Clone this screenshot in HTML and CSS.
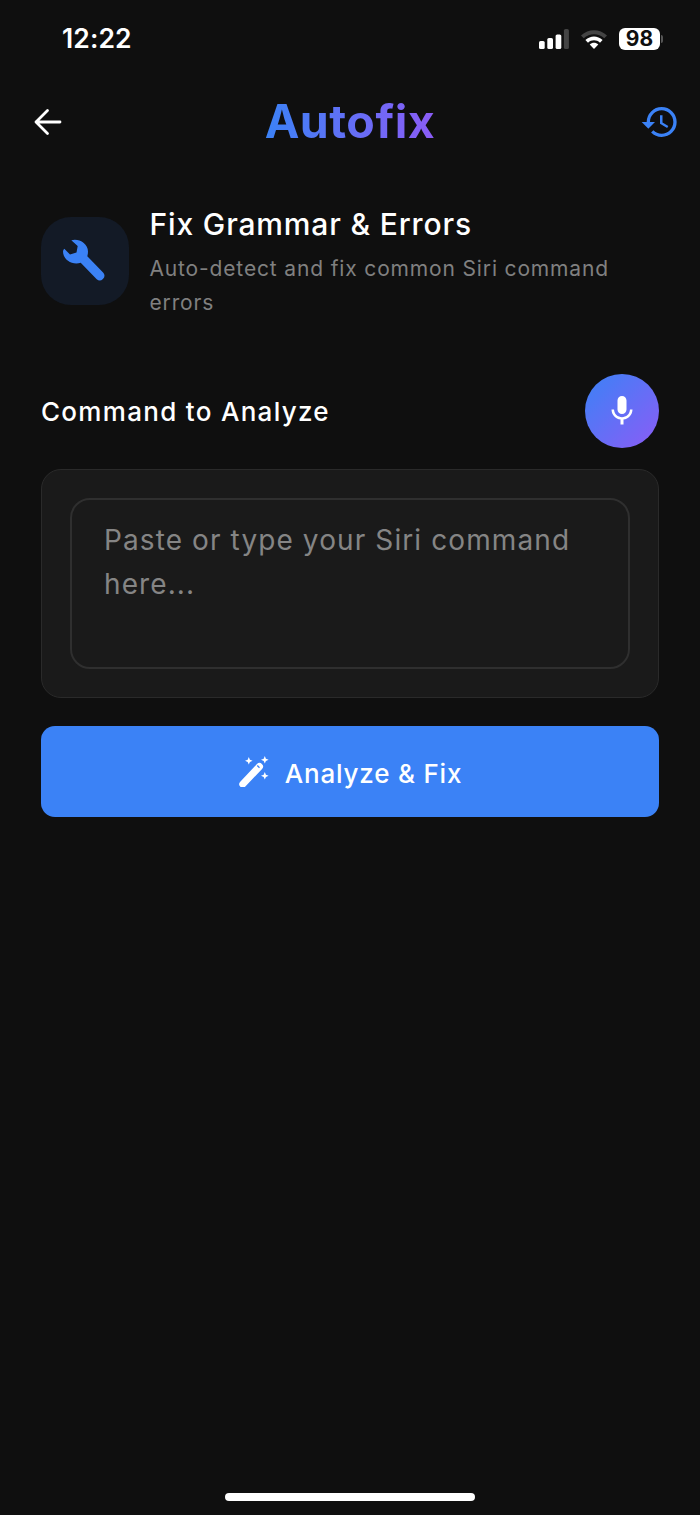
FILE: index.html
```html
<!DOCTYPE html>
<html lang="en">
<head>
<meta charset="utf-8">
<title>Autofix</title>
<link rel="stylesheet" href="styles.css">
</head>
<body>
<div class="screen">
  <div class="status">
    <span class="time">12:22</span>
    <div class="status-icons">
      <svg class="signal" width="32" height="22" viewBox="0 0 32 22">
        <rect x="1" y="13" width="5.7" height="8" rx="1.6" fill="#fff"/>
        <rect x="9.300" y="10" width="5.700" height="11" rx="1.6" fill="#fff"/>
        <rect x="17.600" y="6.500" width="5.700" height="14.500" rx="1.6" fill="#fff"/>
        <rect x="25.900" y="1" width="5" height="20" rx="1.600" fill="#444"/>
      </svg>
      <svg class="wifi" width="28" height="22" viewBox="0 0 28 22">
        <path d="M1 7.500C8.500 .5 19.500 .5 27 7.500L24.300 10.300C18.500 5 9.500 5 3.700 10.300Z" fill="#444"/>
        <path d="M5.400 12C10.500 7.200 17.500 7.200 22.600 12L20 14.700C16.300 11.500 11.700 11.500 8 14.700Z" fill="#fff"/>
        <path d="M9.700 16.500C12.300 14.300 15.700 14.300 18.300 16.500L14 21Z" fill="#fff"/>
      </svg>
      <div class="battery"><span class="battery-level">98</span><span class="battery-cap"></span></div>
    </div>
  </div>

  <header class="topbar">
    <svg class="back" width="30" height="30" viewBox="0 0 30 30" fill="none" stroke="#fff" stroke-width="2.800" stroke-linecap="round" stroke-linejoin="round">
      <path d="M3 15H27M14.500 3.500L3 15L14.500 26.500"/>
    </svg>
    <h1 class="brand">Autofix</h1>
    <svg class="history" width="40" height="40" viewBox="0 0 24 24" fill="#3b82f6">
      <path d="M13 3a9 9 0 0 0-9 9H1l3.890 3.890.07.140L9 12H6c0-3.870 3.130-7 7-7s7 3.130 7 7-3.130 7-7 7c-1.930 0-3.680-.79-4.940-2.060l-1.420 1.420A8.954 8.954 0 0 0 13 21a9 9 0 0 0 0-18zm-1 5v5l4.280 2.540.72-1.210-3.500-2.080V8H12z"/>
    </svg>
  </header>

  <section class="intro">
    <div class="intro-icon">
      <svg width="60" height="56" viewBox="0 1 60 56" fill="#3b82f6">
        <path d="M9.300 16.700L15 22.500L21.500 20.500L22.700 14L16.300 8.300C23 6 33 11 33 19.500C33 21 32.800 22.500 32.300 24.200L48.300 40.700A4.700 4.700 0 0 1 41.700 47.300L25.700 30.800C17 33.500 8 27.500 8 19.500C8 18.500 8.500 17.500 9.300 16.700Z"/>
      </svg>
    </div>
    <div class="intro-text">
      <h2 class="intro-title">Fix Grammar &amp; Errors</h2>
      <p class="intro-desc">Auto-detect and fix common Siri command errors</p>
    </div>
  </section>

  <div class="section-row">
    <h3 class="section-label">Command to Analyze</h3>
    <button class="mic" type="button" aria-label="Voice input">
      <svg width="36" height="36" viewBox="0 0 24 24" fill="#fff">
        <path d="M12 14c1.660 0 3-1.340 3-3V5c0-1.660-1.340-3-3-3S9 3.340 9 5v6c0 1.660 1.340 3 3 3zm5.300-3c0 3-2.540 5.100-5.300 5.100S6.700 14 6.700 11H5c0 3.410 2.720 6.230 6 6.720V21h2v-3.280c3.280-.49 6-3.310 6-6.720h-1.700z"/>
      </svg>
    </button>
  </div>

  <div class="card">
    <div class="input">Paste or type your Siri command here...</div>
  </div>

  <button class="primary" type="button">
    <svg class="wand" width="33" height="33" viewBox="0 0 33 33" fill="#fff">
      <path d="M4.800 30.200L21.500 12.500" fill="none" stroke="#fff" stroke-width="7" stroke-linecap="round"/>
      <path d="M19.300 11.500L21.500 13.700" fill="none" stroke="#3b82f6" stroke-width="1.300"/>
      <path d="M10.800 3l1.100 2.700 2.700 1.100-2.700 1.100-1.100 2.700-1.100-2.700-2.700-1.100 2.700-1.100zM26.800 2l1.100 2.700 2.700 1.100-2.700 1.100-1.100 2.700-1.100-2.700-2.700-1.100 2.700-1.100zM26.800 18l1.100 2.700 2.700 1.100-2.700 1.100-1.100 2.700-1.100-2.700-2.700-1.100 2.700-1.100z"/>
    </svg>
    <span class="primary-label">Analyze &amp; Fix</span>
  </button>

  <div class="home-indicator"></div>
</div>
</body>
</html>
```

FILE: styles.css
```css
* { box-sizing: border-box; }
html, body { margin: 0; padding: 0; background: #0f0f0f; }
.screen {
  width: 700px;
  height: 1515px;
  background: #0f0f0f;
  color: #fff;
  font-family: Inter, "Liberation Sans", sans-serif;
  display: flex;
  flex-direction: column;
  padding: 0 41px;
}
.status {
  height: 78px;
  margin: 0 -41px;
  padding: 0 37px 0 62px;
  display: flex;
  justify-content: space-between;
  align-items: center;
}
.time { font-size: 26.500px; font-weight: 600; letter-spacing: .1px; margin-top: -2px; }
.status-icons { display: flex; align-items: center; gap: 11px; }
.wifi { margin-left: -1px; }
.battery { display: flex; align-items: center; gap: 1px; }
.battery-level {
  width: 41px; height: 22px;
  background: #fff; color: #0f0f0f;
  border-radius: 6px;
  font-size: 21px; font-weight: 700;
  line-height: 22px; text-align: center;
}
.battery-cap { width: 2px; height: 8px; background: #555; border-radius: 0 2px 2px 0; }

.topbar {
  height: 88px;
  display: grid;
  grid-template-columns: 1fr auto 1fr;
  align-items: center;
  margin: 0 -21px;
}
.back { margin-left: 13px; justify-self: start; }
.history { justify-self: end; }
.brand {
  margin: -2px 0 0;
  font-size: 46.500px;
  font-weight: 700;
  letter-spacing: .5px;
  background: linear-gradient(90deg, #3b82f6, #8b5cf6);
  -webkit-background-clip: text;
  background-clip: text;
  color: transparent;
}
.intro { display: flex; gap: 20.500px; margin-top: 51px; }
.intro-icon {
  width: 88px; height: 88px;
  flex: none;
  border-radius: 30px;
  background: #131a26;
  display: flex; align-items: center; justify-content: center;
}
.intro-text { margin-top: -12px; }
.intro-title { margin: 0; font-size: 30px; font-weight: 500; line-height: 38px; letter-spacing: .85px; }
.intro-desc { margin: 9px 0 0; font-size: 21px; line-height: 34px; letter-spacing: .85px; color: #808080; width: 490px; }

.section-row {
  display: flex;
  justify-content: space-between;
  align-items: center;
  margin-top: 54px;
}
.section-label { margin: 0; font-size: 26px; font-weight: 500; letter-spacing: 1.300px; }
.mic {
  width: 74px; height: 74px;
  padding: 0; border: 0;
  border-radius: 50%;
  background: linear-gradient(135deg, #3b82f6, #8b5cf6);
  display: flex; align-items: center; justify-content: center;
}
.card {
  margin-top: 21px;
  height: 229px;
  padding: 28px;
  background: #1a1a1a;
  border: 1px solid #2a2a2a;
  border-radius: 20px;
}
.input {
  height: 100%;
  padding: 18px 32px;
  border: 2px solid #2f2f2f;
  border-radius: 20px;
  font-size: 28px;
  line-height: 44px;
  letter-spacing: 1.100px;
  color: #858585;
}
.primary {
  margin-top: 28px;
  height: 91px;
  width: 100%;
  border: 0;
  border-radius: 14px;
  background: #3b82f6;
  color: #fff;
  font-family: inherit;
  font-size: 26px;
  font-weight: 500;
  letter-spacing: .8px;
  display: flex; align-items: center; justify-content: center;
  gap: 14px;
}
.wand { margin-top: -3px; }
.primary-label { margin-top: 3px; }
.home-indicator {
  width: 250px; height: 8px;
  border-radius: 4px;
  background: #fff;
  margin: auto auto 14px;
}
```
